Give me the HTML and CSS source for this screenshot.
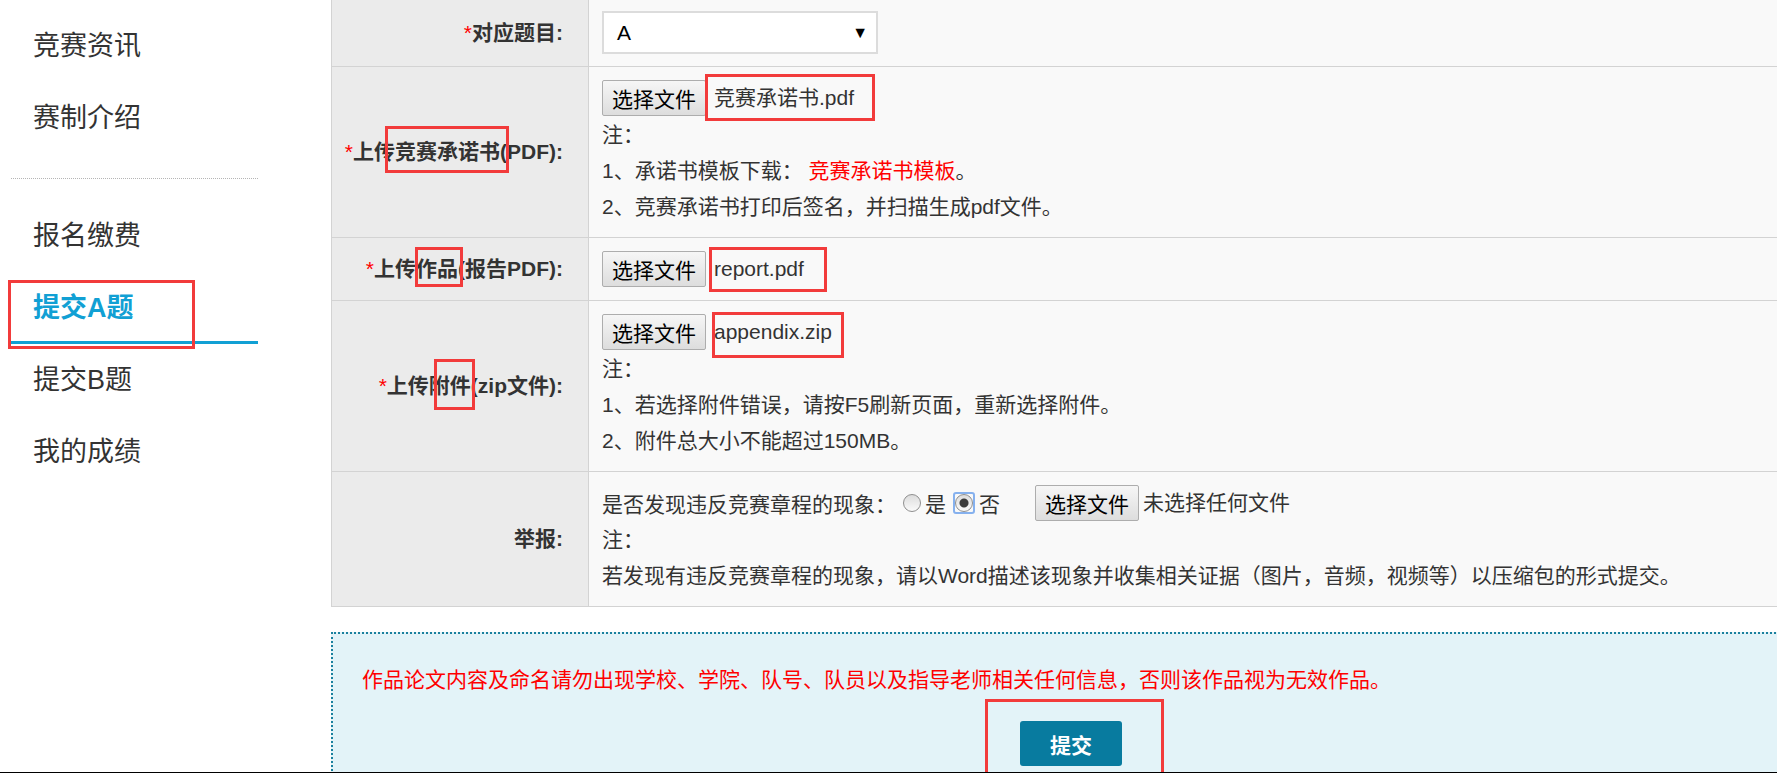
FILE: index.html
```html
<!DOCTYPE html>
<html lang="zh-CN">
<head>
    <meta charset="UTF-8">
    <title>提交A题</title>
    <link rel="stylesheet" href="styles.css">
</head>
<body>
<div class="page">
    <aside class="sidebar">
        <ul class="nav">
            <li>竞赛资讯</li>
            <li>赛制介绍</li>
            <li class="sep"></li>
            <li>报名缴费</li>
            <li class="active"><span class="mark mark-nav">提交A题</span></li>
            <li>提交B题</li>
            <li>我的成绩</li>
        </ul>
    </aside>

    <main class="main">
        <table class="form-table">
            <tr class="row-first">
                <td class="label"><span class="req">*</span>对应题目:</td>
                <td class="field">
                    <div class="select"><span>A</span><span class="arrow">▼</span></div>
                </td>
            </tr>
            <tr>
                <td class="label"><span class="req">*</span>上传<span class="mark mark-l1">竞赛承诺书</span>(PDF):</td>
                <td class="field">
                    <div class="file-line">
                        <button class="btn-file">选择文件</button>
                        <span class="fname mark mark-f1">竞赛承诺书.pdf</span>
                    </div>
                    <p class="note">注：</p>
                    <p class="note">1、承诺书模板下载： <a class="link-red" href="#">竞赛承诺书模板</a>。</p>
                    <p class="note">2、竞赛承诺书打印后签名，并扫描生成pdf文件。</p>
                </td>
            </tr>
            <tr>
                <td class="label"><span class="req">*</span>上传<span class="mark mark-l2">作品</span>(报告PDF):</td>
                <td class="field">
                    <div class="file-line">
                        <button class="btn-file">选择文件</button>
                        <span class="fname mark mark-f2">report.pdf</span>
                    </div>
                </td>
            </tr>
            <tr>
                <td class="label"><span class="req">*</span>上传<span class="mark mark-l3">附件</span>(zip文件):</td>
                <td class="field">
                    <div class="file-line">
                        <button class="btn-file">选择文件</button>
                        <span class="fname mark mark-f3">appendix.zip</span>
                    </div>
                    <p class="note">注：</p>
                    <p class="note">1、若选择附件错误，请按F5刷新页面，重新选择附件。</p>
                    <p class="note">2、附件总大小不能超过150MB。</p>
                </td>
            </tr>
            <tr>
                <td class="label">举报:</td>
                <td class="field">
                    <div class="file-line">
                        <span>是否发现违反竞赛章程的现象：</span>
                        <input class="radio" type="radio" name="report">
                        <span class="radio-text">是</span>
                        <span class="focus-ring"><input class="radio" type="radio" name="report" checked></span>
                        <span class="radio-text">否</span>
                        <button class="btn-file btn-gap">选择文件</button>
                        <span class="fname">未选择任何文件</span>
                    </div>
                    <p class="note">注：</p>
                    <p class="note">若发现有违反竞赛章程的现象，请以Word描述该现象并收集相关证据（图片，音频，视频等）以压缩包的形式提交。</p>
                </td>
            </tr>
        </table>

        <div class="submit-box">
            <p class="warn">作品论文内容及命名请勿出现学校、学院、队号、队员以及指导老师相关任何信息，否则该作品视为无效作品。</p>
            <div class="submit-wrap">
                <span class="mark mark-submit"><button class="btn-submit">提交</button></span>
            </div>
        </div>
    </main>
</div>
</body>
</html>
```

FILE: styles.css
```css
body {
    margin: 0;
    font-family: "Liberation Sans", "Noto Sans CJK SC", sans-serif;
    color: #333;
    background-color: #fff;
}
.page {
    display: flex;
    width: 1777px;
    height: 773px;
    overflow: hidden;
    box-sizing: border-box;
    border-bottom: 1px solid #000;
}

/* sidebar */
.sidebar {
    flex: none;
    width: 258px;
    padding-top: 10px;
}
.nav {
    list-style: none;
    margin: 0 0 0 11px;
    padding: 0;
}
.nav li {
    height: 72px;
    line-height: 72px;
    padding-left: 22px;
    font-size: 27px;
    box-sizing: border-box;
    color: #333;
}
.nav .sep {
    height: 25px;
    padding: 0;
    margin-bottom: 21px;
    border-bottom: 1px dotted #b5b5b5;
}
.nav .active {
    color: #11a0d4;
    font-weight: bold;
    border-bottom: 3px solid #11a0d4;
}

/* red annotation boxes */
.mark {
    position: relative;
}
.mark::after {
    content: "";
    position: absolute;
    border: 3px solid #f23b3b;
    pointer-events: none;
}
.mark-nav::after { top: -13px; bottom: -26px; left: -25px; right: -61px; }
.mark-l1::after { top: -14px; bottom: -10px; left: -10px; right: -9px; }
.mark-l2::after { top: -10px; bottom: -7px; left: -1px; right: -5px; }
.mark-l3::after { top: -15px; bottom: -13px; left: 5px; right: -4px; }
.mark-f1::after { top: -12px; bottom: -11px; left: -9px; right: -21px; }
.mark-f2::after { top: -10px; bottom: -11px; left: -5px; right: -23px; }
.mark-f3::after { top: -8px; bottom: -14px; left: -2px; right: -12px; }
.mark-submit {
    display: inline-block;
}
.mark-submit::after { top: -22px; bottom: -12px; left: -35px; right: -42px; }

/* form table */
.main {
    flex: none;
    width: 1480px;
    margin-left: 73px;
}
.form-table {
    width: 100%;
    border-collapse: separate;
    border-spacing: 0;
    border-left: 1px solid #d3d3d3;
    font-size: 21px;
}
.form-table td {
    border-bottom: 1px solid #d3d3d3;
    padding-top: 12px;
    padding-bottom: 12px;
}
.form-table .row-first td {
    padding-top: 11px;
}
.label {
    width: 257px;
    box-sizing: border-box;
    padding-right: 25px;
    text-align: right;
    font-weight: bold;
    line-height: 30px;
    background-color: #ebebeb;
    border-right: 1px solid #d3d3d3;
    color: #333;
}
.req {
    color: #f00;
    font-weight: normal;
}
.field {
    padding-left: 13px;
    vertical-align: top;
    background-color: #f9f9f9;
}
.select {
    display: flex;
    align-items: center;
    justify-content: space-between;
    width: 276px;
    height: 43px;
    box-sizing: border-box;
    padding: 0 8px 0 13px;
    border: 2px solid #dcdcdc;
    background-color: #fff;
    color: #000;
}
.select .arrow {
    font-size: 16px;
}
.file-line {
    display: flex;
    align-items: center;
    height: 38px;
}
.btn-file {
    width: 104px;
    height: 36px;
    padding: 0;
    margin-right: 8px;
    font-family: inherit;
    font-size: 21px;
    color: #000;
    border: 1px solid #adadad;
    border-radius: 2px;
    background: linear-gradient(#f6f6f6, #dddddd);
}
.btn-gap {
    margin-left: 35px;
    margin-right: 4px;
}
.fname {
    line-height: 24px;
}
.note {
    margin: 0;
    line-height: 36px;
}
.link-red {
    color: #f00;
    text-decoration: none;
}
.radio {
    appearance: none;
    width: 18px;
    height: 18px;
    margin: 0;
    border: 1px solid #8f8f8f;
    border-radius: 50%;
    background: linear-gradient(#dcdcdc, #fafafa);
}
.radio:checked {
    background: radial-gradient(circle, #3c3c3c 0 4px, transparent 5px), linear-gradient(#dcdcdc, #fafafa);
}
.file-line > .radio {
    margin-left: 7px;
}
.focus-ring {
    display: flex;
    margin-left: 7px;
    border: 2px solid #86b1ee;
    border-radius: 3px;
}
.radio-text {
    margin-left: 4px;
}

/* submit area */
.submit-box {
    margin-top: 25px;
    padding-top: 31px;
    height: 200px;
    border: 2px dotted #1a809e;
    background-color: #e3f3f8;
}
.warn {
    margin: 0;
    padding-left: 29px;
    color: #f00;
    font-size: 21px;
    line-height: 30px;
}
.submit-wrap {
    margin-top: 26px;
    text-align: center;
}
.btn-submit {
    display: block;
    width: 102px;
    height: 45px;
    border: none;
    border-radius: 3px;
    background-color: #087b9f;
    color: #fff;
    font-family: inherit;
    font-size: 21px;
    font-weight: bold;
}
```
